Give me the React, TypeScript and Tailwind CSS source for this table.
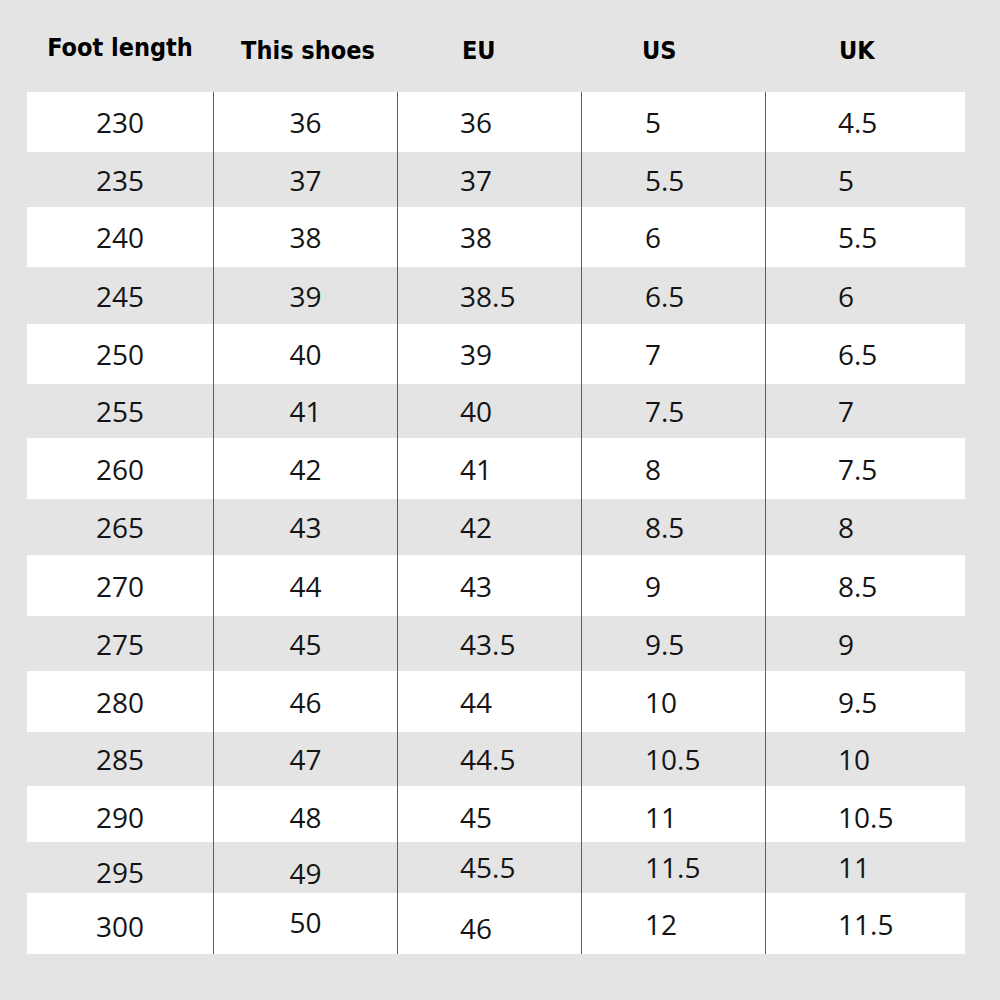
type SizeRow = {
  foot: string;
  shoes: string;
  eu: string;
  us: string;
  uk: string;
  height: string;
  tone: string;
  // small vertical nudges per cell, the source chart is not perfectly aligned
  nudge?: string[];
};

const rows: SizeRow[] = [
  { foot: "230", shoes: "36", eu: "36", us: "5", uk: "4.5", height: "h-[60px]", tone: "bg-white" },
  { foot: "235", shoes: "37", eu: "37", us: "5.5", uk: "5", height: "h-[55px]", tone: "bg-[#e4e4e4]" },
  { foot: "240", shoes: "38", eu: "38", us: "6", uk: "5.5", height: "h-[60px]", tone: "bg-white" },
  { foot: "245", shoes: "39", eu: "38.5", us: "6.5", uk: "6", height: "h-[57px]", tone: "bg-[#e4e4e4]" },
  { foot: "250", shoes: "40", eu: "39", us: "7", uk: "6.5", height: "h-[60px]", tone: "bg-white" },
  { foot: "255", shoes: "41", eu: "40", us: "7.5", uk: "7", height: "h-[54px]", tone: "bg-[#e4e4e4]" },
  { foot: "260", shoes: "42", eu: "41", us: "8", uk: "7.5", height: "h-[61px]", tone: "bg-white" },
  { foot: "265", shoes: "43", eu: "42", us: "8.5", uk: "8", height: "h-[56px]", tone: "bg-[#e4e4e4]" },
  { foot: "270", shoes: "44", eu: "43", us: "9", uk: "8.5", height: "h-[61px]", tone: "bg-white" },
  { foot: "275", shoes: "45", eu: "43.5", us: "9.5", uk: "9", height: "h-[55px]", tone: "bg-[#e4e4e4]" },
  { foot: "280", shoes: "46", eu: "44", us: "10", uk: "9.5", height: "h-[61px]", tone: "bg-white" },
  { foot: "285", shoes: "47", eu: "44.5", us: "10.5", uk: "10", height: "h-[54px]", tone: "bg-[#e4e4e4]" },
  {
    foot: "290", shoes: "48", eu: "45", us: "11", uk: "10.5", height: "h-[56px]", tone: "bg-white",
    nudge: ["translate-y-[3px]", "translate-y-[3px]", "translate-y-[3px]", "translate-y-[3px]", "translate-y-[3px]"],
  },
  {
    foot: "295", shoes: "49", eu: "45.5", us: "11.5", uk: "11", height: "h-[51px]", tone: "bg-[#e4e4e4]",
    nudge: ["translate-y-[4px]", "translate-y-[5px]", "-translate-y-[1px]", "-translate-y-[1px]", "-translate-y-[1px]"],
  },
  {
    foot: "300", shoes: "50", eu: "46", us: "12", uk: "11.5", height: "h-[61px]", tone: "bg-white",
    nudge: ["translate-y-[2px]", "-translate-y-[2px]", "translate-y-[4px]", "translate-y-0", "translate-y-0"],
  },
];

const headFont = "font-['DejaVu_Sans_Condensed','DejaVu_Sans',sans-serif] font-bold text-[25px] text-black";
const cellFont = "font-['Open_Sans','Noto_Sans',sans-serif] text-[28px] text-[#141414]";
const divider = "border-l-[1.5px] border-[#5e5e5e]";

export default function App() {
  return (
    <div className="h-[1000px] w-[1000px] bg-[#e4e4e4]">
      <div className="ml-[27px] w-[938px]">
        <div className={`flex h-[92px] items-center pt-[4px] ${headFont}`}>
          <div className="w-[186px] text-center">Foot length</div>
          <div className="w-[184px] translate-y-[3px] pl-[6px] text-center">This shoes</div>
          <div className="w-[184px] translate-y-[3px] pl-[65px]">EU</div>
          <div className="w-[184px] translate-y-[3px] pl-[61px]">US</div>
          <div className="w-[200px] translate-y-[3px] pl-[74px]">UK</div>
        </div>

        <div className={cellFont}>
          {rows.map((row) => {
            const n = row.nudge ?? [];
            return (
              <div key={row.foot} className={`flex items-center ${row.height} ${row.tone}`}>
                <div className="flex h-full w-[186px] items-center justify-center">
                  <span className={n[0]}>{row.foot}</span>
                </div>
                <div className={`flex h-full w-[184px] items-center justify-center ${divider}`}>
                  <span className={n[1]}>{row.shoes}</span>
                </div>
                <div className={`flex h-full w-[184px] items-center pl-[62px] ${divider}`}>
                  <span className={n[2]}>{row.eu}</span>
                </div>
                <div className={`flex h-full w-[184px] items-center pl-[63px] ${divider}`}>
                  <span className={n[3]}>{row.us}</span>
                </div>
                <div className={`flex h-full w-[200px] items-center pl-[72px] ${divider}`}>
                  <span className={n[4]}>{row.uk}</span>
                </div>
              </div>
            );
          })}
        </div>
      </div>
    </div>
  );
}
